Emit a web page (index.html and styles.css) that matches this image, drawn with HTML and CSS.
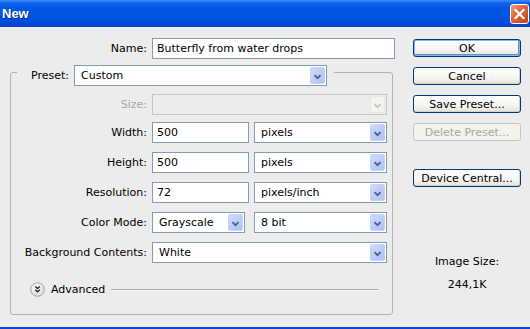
FILE: index.html
```html
<!DOCTYPE html>
<html>
<head>
  <meta charset="UTF-8">
  <link rel="stylesheet" href="styles.css">
  <title>New</title>
</head>
<body>
  <div class="window">

    <div class="titlebar">
      <span class="title">New</span>
      <span class="close">
        <svg width="17" height="18" viewBox="0 0 17 18"><path d="M4.5 5l8 8M12.5 5l-8 8" stroke="#fff" stroke-width="2.2" stroke-linecap="square"/></svg>
      </span>
    </div>

    <div class="content">
      <div class="form">
        <div class="name-row">
          <label class="lbl">Name:</label>
          <div class="textbox name">Butterfly from water drops</div>
        </div>

        <div class="group">
          <div class="group-head">
            <label>Preset:</label>
            <div class="combo preset">
              <span class="val">Custom</span>
              <span class="arrow"><svg width="15" height="17" viewBox="0 0 15 17"><path d="M4 7l3.5 3.5L11 7" fill="none" stroke="#4d6185" stroke-width="2"/></svg></span>
            </div>
          </div>

          <div class="rows">
            <label class="lbl off">Size:</label>
            <div class="combo off size-row">
              <span class="val"></span>
              <span class="arrow"><svg width="15" height="17" viewBox="0 0 15 17"><path d="M4 7l3.5 3.5L11 7" fill="none" stroke="#c9c7ba" stroke-width="2"/></svg></span>
            </div>

            <label class="lbl">Width:</label>
            <div class="pair">
              <div class="textbox num">500</div>
              <div class="combo unit">
                <span class="val">pixels</span>
                <span class="arrow"><svg width="15" height="17" viewBox="0 0 15 17"><path d="M4 7l3.5 3.5L11 7" fill="none" stroke="#4d6185" stroke-width="2"/></svg></span>
              </div>
            </div>

            <label class="lbl">Height:</label>
            <div class="pair">
              <div class="textbox num">500</div>
              <div class="combo unit">
                <span class="val">pixels</span>
                <span class="arrow"><svg width="15" height="17" viewBox="0 0 15 17"><path d="M4 7l3.5 3.5L11 7" fill="none" stroke="#4d6185" stroke-width="2"/></svg></span>
              </div>
            </div>

            <label class="lbl">Resolution:</label>
            <div class="pair">
              <div class="textbox num">72</div>
              <div class="combo unit">
                <span class="val">pixels/inch</span>
                <span class="arrow"><svg width="15" height="17" viewBox="0 0 15 17"><path d="M4 7l3.5 3.5L11 7" fill="none" stroke="#4d6185" stroke-width="2"/></svg></span>
              </div>
            </div>

            <label class="lbl">Color Mode:</label>
            <div class="pair">
              <div class="combo mode">
                <span class="val">Grayscale</span>
                <span class="arrow"><svg width="15" height="17" viewBox="0 0 15 17"><path d="M4 7l3.5 3.5L11 7" fill="none" stroke="#4d6185" stroke-width="2"/></svg></span>
              </div>
              <div class="combo unit">
                <span class="val">8 bit</span>
                <span class="arrow"><svg width="15" height="17" viewBox="0 0 15 17"><path d="M4 7l3.5 3.5L11 7" fill="none" stroke="#4d6185" stroke-width="2"/></svg></span>
              </div>
            </div>

            <label class="lbl">Background Contents:</label>
            <div class="combo">
              <span class="val">White</span>
              <span class="arrow"><svg width="15" height="17" viewBox="0 0 15 17"><path d="M4 7l3.5 3.5L11 7" fill="none" stroke="#4d6185" stroke-width="2"/></svg></span>
            </div>
          </div>

          <div class="advanced">
            <svg width="15" height="15" viewBox="0 0 15 15">
              <defs>
                <radialGradient id="knob" cx="0.4" cy="0.35" r="0.7">
                  <stop offset="0" stop-color="#ffffff"/>
                  <stop offset="1" stop-color="#d8d8d8"/>
                </radialGradient>
              </defs>
              <circle cx="7.5" cy="7.5" r="6.8" fill="url(#knob)" stroke="#a4a4a4"/>
              <path d="M5.2 4.6l2.3 2 2.3-2M5.2 7.8l2.3 2 2.3-2" fill="none" stroke="#222" stroke-width="1.3"/>
            </svg>
            <span>Advanced</span>
            <span class="rule"></span>
          </div>
        </div>
      </div>

      <div class="side">
        <button class="btn default">OK</button>
        <button class="btn">Cancel</button>
        <button class="btn">Save Preset...</button>
        <button class="btn" disabled>Delete Preset...</button>
        <button class="btn device">Device Central...</button>

        <div class="info">Image Size:</div>
        <div class="info size">244,1K</div>
      </div>
    </div>

    <div class="frame-bottom"></div>
  </div>
</body>
</html>
```

FILE: styles.css
```css
body {
  margin: 0;
  font-family: "DejaVu Sans", sans-serif;
  font-size: 11px;
  color: #000;
}

.window {
  width: 530px;
  height: 329px;
  background: #ececec;
  display: flex;
  flex-direction: column;
}

/* title bar */
.titlebar {
  height: 27px;
  flex: none;
  display: flex;
  align-items: center;
  justify-content: space-between;
  padding: 0 1px 0 2px;
  background: linear-gradient(to bottom, #3d8bff 0, #0f63ec 3px, #0058e6 8px, #0054e3 17px, #004bdb 23px, #0040c8 27px);
}

.title {
  font-family: "Liberation Sans", Arial, sans-serif;
  font-weight: bold;
  font-size: 13px;
  color: #fff;
  text-shadow: 1px 1px 0 #0b2a8e;
}

.close {
  width: 19px;
  height: 20px;
  box-sizing: border-box;
  border: 1px solid #fff;
  border-radius: 3px;
  background: linear-gradient(135deg, #f09a7c 0, #e0623a 45%, #c8401c 100%);
  display: flex;
  align-items: center;
  justify-content: center;
  margin-top: 1px;
}

.content {
  flex: 1;
  display: flex;
  padding: 11px 0 0 10px;
}

.form {
  width: 386px;
}

.lbl {
  text-align: right;
  line-height: 21px;
}

.off {
  color: #aca899;
}

.name-row {
  display: flex;
  gap: 5px;
}

.name-row .lbl {
  width: 137px;
}

/* text fields and combos */
.textbox {
  height: 21px;
  box-sizing: border-box;
  border: 1px solid #7f9db9;
  background: #fff;
  padding: 0 4px;
  line-height: 19px;
  white-space: nowrap;
}

.textbox.name {
  width: 243px;
}

.textbox.num {
  width: 97px;
}

.combo {
  display: flex;
  height: 21px;
  box-sizing: border-box;
  border: 1px solid #7f9db9;
  background: #fff;
  padding: 1px;
}

.combo .val {
  flex: 1;
  padding-left: 5px;
  line-height: 17px;
  white-space: nowrap;
}

.combo .arrow {
  width: 15px;
  height: 17px;
  box-sizing: border-box;
  border: 1px solid #c3d3fd;
  border-radius: 2px;
  background: linear-gradient(135deg, #d0dcfd 0, #bccdf9 50%, #aec2f3 100%);
  display: flex;
}

.combo.off {
  border-color: #c9c7ba;
  background: #ececec;
}

.combo.off .arrow {
  border-color: #e8e7e0;
  background: #f3f3ef;
}

.combo.preset {
  width: 253px;
}

.combo.unit {
  width: 133px;
}

.combo.mode {
  width: 93px;
}

/* preset group */
.group {
  margin-top: 13px;
  width: 383px;
  box-sizing: border-box;
  border: 1px solid #b4b4ac;
  border-radius: 3px;
  padding: 0 4px 17px 0;
}

.group-head {
  display: flex;
  align-items: center;
  gap: 5px;
  width: fit-content;
  margin: -8px 0 0 6px;
  padding: 0 7px 0 14px;
  background: #ececec;
}

.rows {
  display: grid;
  grid-template-columns: 136px 235px;
  column-gap: 5px;
  row-gap: 9px;
  margin-top: 8px;
}

.size-row {
  margin-bottom: -2px;
}

.rows .off {
  margin-bottom: -2px;
}

.pair {
  display: flex;
  justify-content: space-between;
}

.advanced {
  display: flex;
  align-items: center;
  gap: 6px;
  margin: 19px 10px 0 19px;
  line-height: 15px;
}

.advanced .rule {
  flex: 1;
  height: 0;
  border-top: 1px solid #a8a8a8;
  border-bottom: 1px solid #fafafa;
}

/* right column */
.side {
  width: 108px;
  margin-left: 17px;
  padding-top: 1px;
  display: flex;
  flex-direction: column;
  gap: 10px;
}

.btn {
  height: 18px;
  padding: 0;
  font-family: "DejaVu Sans", sans-serif;
  font-size: 11px;
  color: #000;
  border: 1px solid #003c74;
  border-radius: 3px;
  background: linear-gradient(to bottom, #ffffff 0, #f5f5f1 60%, #e3e1d8 100%);
  box-shadow: inset -1px -1px 0 #d6d0c5;
}

.btn.default {
  box-shadow: inset 0 0 0 1px #8cb4f2, inset -1px -1px 0 1px #5d8fd8;
}

.btn:disabled {
  color: #aca899;
  border-color: #c9c7ba;
  background: #f3f2ec;
  box-shadow: none;
}

.btn.device {
  margin-top: 18px;
}

.info {
  text-align: center;
  line-height: 14px;
  margin-top: 58px;
}

.info.size {
  margin-top: -1px;
}

.frame-bottom {
  height: 2px;
  flex: none;
  background: #0848d8;
}
```
